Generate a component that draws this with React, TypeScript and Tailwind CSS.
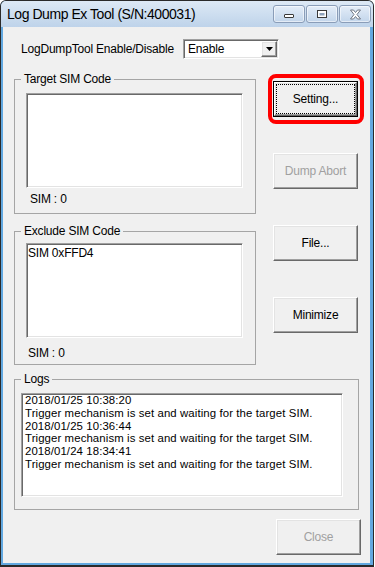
import React from "react";

const raised =
  "border border-t-white border-l-white border-r-[#696969] border-b-[#696969] shadow-[inset_-1px_-1px_0_#a0a0a0,inset_1px_1px_0_#e3e3e3]";
const sunken =
  "border border-t-[#a0a0a0] border-l-[#a0a0a0] border-r-white border-b-white shadow-[inset_1px_1px_0_#696969,inset_-1px_-1px_0_#e3e3e3]";

function Btn({ label, disabled }: { label: string; disabled?: boolean }) {
  return (
    <div
      className={`w-[85px] h-[36px] shrink-0 bg-[#f0f0f0] flex items-center justify-center ${raised} ${
        disabled ? "text-[#a0a0a0]" : "text-black"
      }`}
    >
      {label}
    </div>
  );
}

function CapBtn({ children }: { children: React.ReactNode }) {
  return (
    <div className="w-[32px] h-[18px] rounded-[3px] border border-[#8a9db8] bg-linear-to-b from-[#e4edf8] to-[#c2d5eb] shadow-[inset_0_0_0_1px_rgba(255,255,255,0.55)] flex items-center justify-center">
      {children}
    </div>
  );
}

export default function App() {
  const logs = [
    "2018/01/25 10:38:20",
    "Trigger mechanism is set and waiting for the target SIM.",
    "2018/01/25 10:36:44",
    "Trigger mechanism is set and waiting for the target SIM.",
    "2018/01/24 18:34:41",
    "Trigger mechanism is set and waiting for the target SIM.",
  ];
  return (
    <div className="w-[375px] h-[567px] bg-white font-['Liberation_Sans',Arial,sans-serif] text-[12px] tracking-[-0.2px] leading-[12px] text-black">
      <div className="w-[374px] h-[567px] flex flex-col border border-[#2a2a2a] border-b-2 rounded-t-[6px] bg-[#62a8e0] overflow-hidden">
        {/* Title bar */}
        <div className="h-[26px] shrink-0 flex items-start bg-linear-to-b from-[#dde9f5] to-[#bed3ea]">
          <div className="flex-1 pl-[6px] h-[26px] leading-[26px] text-[14px] tracking-[-0.45px] whitespace-nowrap">
            Log Dump Ex Tool (S/N:400031)
          </div>
          <div className="flex gap-[1px] mt-[4px] mr-[2px]">
            <CapBtn>
              <svg width="12" height="10" viewBox="0 0 12 10">
                <rect x="1.5" y="5.5" width="9" height="3" rx="0.5" fill="#fff" stroke="#3a3a3a" />
              </svg>
            </CapBtn>
            <CapBtn>
              <svg width="12" height="10" viewBox="0 0 12 10">
                <rect x="1.5" y="1.5" width="9" height="7" fill="#fff" stroke="#3a3a3a" />
                <rect x="3.5" y="4" width="5" height="2.5" fill="#8ea3bd" />
              </svg>
            </CapBtn>
            <CapBtn>
              <svg width="13" height="11" viewBox="0 0 13 11">
                <polygon
                  points="1.5,1 4.5,1 6.5,3.5 8.5,1 11.5,1 8,5.5 11.5,10 8.5,10 6.5,7.5 4.5,10 1.5,10 5,5.5"
                  fill="#fff"
                  stroke="#6f7784"
                  strokeWidth="1"
                  strokeLinejoin="round"
                />
              </svg>
            </CapBtn>
          </div>
        </div>

        {/* Body frame */}
        <div className="flex-1 flex pl-[2px] pr-[3px] pb-[2px] min-h-0">
          <div className="flex-1 bg-[#f0f0f0] flex flex-col min-h-0">
            {/* Row 1 */}
            <div className="mt-[12px] flex items-center h-[20px] pl-[18px] shrink-0">
              <div className="w-[162px] whitespace-nowrap">LogDumpTool Enable/Disable</div>
              <div className={`w-[96px] h-[20px] bg-white flex items-center ${sunken}`}>
                <div className="flex-1 pl-[4px]">Enable</div>
                <div className={`w-[16px] h-[16px] mr-[1px] bg-[#f0f0f0] flex items-center justify-center ${raised}`}>
                  <svg width="7" height="4" viewBox="0 0 7 4">
                    <polygon points="0,0 7,0 3.5,4" fill="#000" />
                  </svg>
                </div>
              </div>
            </div>

            {/* Middle */}
            <div className="mt-[14px] flex shrink-0">
              <div className="ml-[11px] w-[242px] flex flex-col">
                <fieldset className="h-[141px] border border-[#a5a5a5] flex flex-col">
                  <legend className="ml-[6px] px-[3px] leading-[12px]">Target SIM Code</legend>
                  <div className={`ml-[11px] mt-[8px] w-[217px] h-[95px] bg-white ${sunken}`} />
                  <div className="mt-[5px] ml-[15px]">SIM : 0</div>
                </fieldset>
                <fieldset className="mt-[11px] h-[140px] border border-[#a5a5a5] flex flex-col">
                  <legend className="ml-[6px] px-[3px] leading-[12px]">Exclude SIM Code</legend>
                  <div className={`ml-[11px] mt-[6px] w-[217px] h-[95px] bg-white pl-[1px] pt-[3px] ${sunken}`}>
                    SIM 0xFFD4
                  </div>
                  <div className="mt-[9px] ml-[13px]">SIM : 0</div>
                </fieldset>
              </div>
              <div className="ml-[17px] pt-[8px] flex flex-col gap-[36px]">
                <div className="relative w-[85px] h-[36px] border border-black bg-[#f0f0f0] flex">
                  <div className={`flex-1 flex p-[1px] ${raised}`}>
                    <div className="flex-1 border border-dotted border-black flex items-center justify-center">
                      Setting...
                    </div>
                  </div>
                  <div className="absolute -left-[6px] -top-[8px] -right-[7px] -bottom-[8px] border-[4px] border-[#ff0000] rounded-[8px]" />
                </div>
                <Btn label="Dump Abort" disabled />
                <Btn label="File..." />
                <Btn label="Minimize" />
              </div>
            </div>

            {/* Logs */}
            <fieldset className="mt-[8px] ml-[11px] w-[345px] h-[137px] border border-[#a5a5a5] flex flex-col shrink-0">
              <legend className="ml-[6px] px-[3px] leading-[12px]">Logs</legend>
              <div
                className={`ml-[6px] mt-[8px] w-[322px] h-[104px] bg-white pl-[3px] pt-0 text-[11.4px] leading-[12.8px] tracking-[0.1px] ${sunken}`}
              >
                {logs.map((l, i) => (
                  <div key={i} className="whitespace-nowrap">
                    {l}
                  </div>
                ))}
              </div>
            </fieldset>

            <div className="mt-[9px] self-end mr-[9px]">
              <Btn label="Close" disabled />
            </div>
          </div>
        </div>
      </div>
    </div>
  );
}
